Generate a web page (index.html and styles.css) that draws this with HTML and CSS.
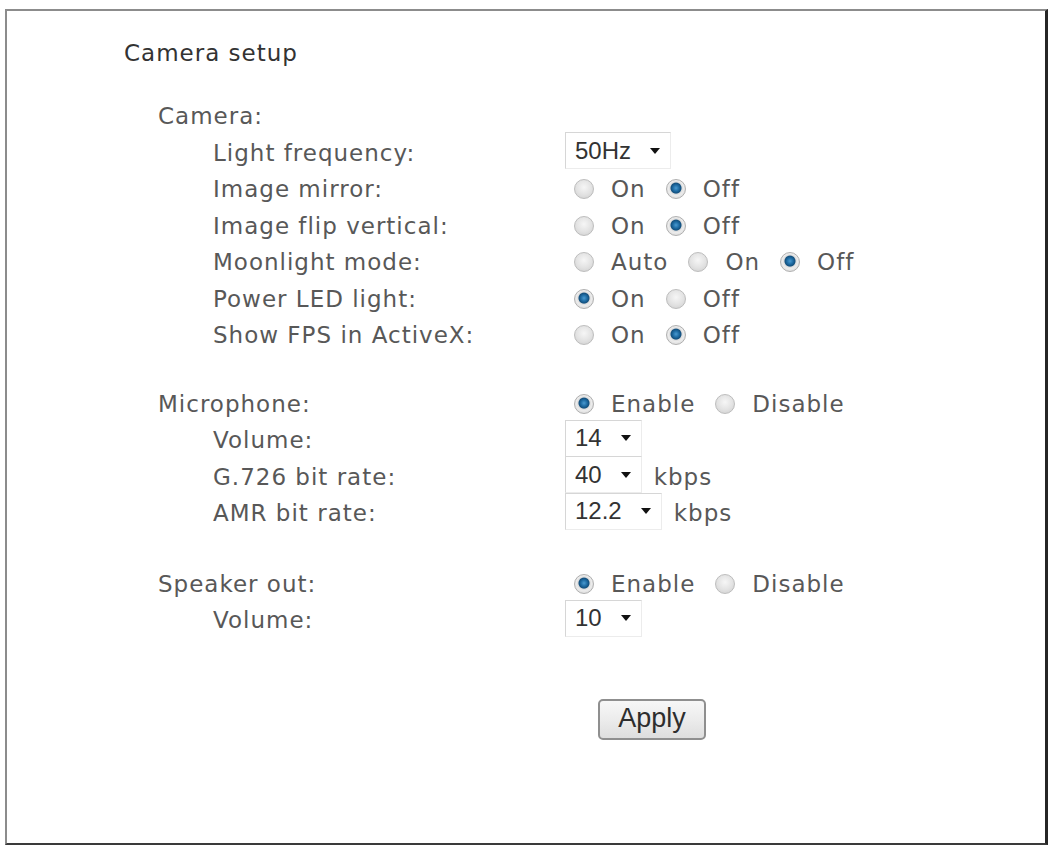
FILE: index.html
```html
<!DOCTYPE html>
<html lang="en">
<head>
    <meta charset="UTF-8">
    <title>Camera setup</title>
    <link rel="stylesheet" href="styles.css">
</head>
<body>

    <div class="frame">
        <div class="title">Camera setup</div>

        <div class="group">
            <div class="row"><span class="label">Camera:</span></div>
            <div class="row sub">
                <span class="label">Light frequency:</span>
                <div class="ctrl"><span class="select">50Hz<i class="arrow"></i></span></div>
            </div>
            <div class="row sub">
                <span class="label">Image mirror:</span>
                <div class="ctrl">
                    <span class="radio"></span><span class="opt">On</span>
                    <span class="radio on"></span><span class="opt">Off</span>
                </div>
            </div>
            <div class="row sub">
                <span class="label">Image flip vertical:</span>
                <div class="ctrl">
                    <span class="radio"></span><span class="opt">On</span>
                    <span class="radio on"></span><span class="opt">Off</span>
                </div>
            </div>
            <div class="row sub">
                <span class="label">Moonlight mode:</span>
                <div class="ctrl">
                    <span class="radio"></span><span class="opt">Auto</span>
                    <span class="radio"></span><span class="opt">On</span>
                    <span class="radio on"></span><span class="opt">Off</span>
                </div>
            </div>
            <div class="row sub">
                <span class="label">Power LED light:</span>
                <div class="ctrl">
                    <span class="radio on"></span><span class="opt">On</span>
                    <span class="radio"></span><span class="opt">Off</span>
                </div>
            </div>
            <div class="row sub">
                <span class="label">Show FPS in ActiveX:</span>
                <div class="ctrl">
                    <span class="radio"></span><span class="opt">On</span>
                    <span class="radio on"></span><span class="opt">Off</span>
                </div>
            </div>
        </div>

        <div class="group">
            <div class="row">
                <span class="label">Microphone:</span>
                <div class="ctrl">
                    <span class="radio on"></span><span class="opt">Enable</span>
                    <span class="radio"></span><span class="opt">Disable</span>
                </div>
            </div>
            <div class="row sub">
                <span class="label">Volume:</span>
                <div class="ctrl"><span class="select">14<i class="arrow"></i></span></div>
            </div>
            <div class="row sub">
                <span class="label">G.726 bit rate:</span>
                <div class="ctrl"><span class="select">40<i class="arrow"></i></span><span class="unit">kbps</span></div>
            </div>
            <div class="row sub">
                <span class="label">AMR bit rate:</span>
                <div class="ctrl"><span class="select">12.2<i class="arrow"></i></span><span class="unit">kbps</span></div>
            </div>
        </div>

        <div class="group">
            <div class="row">
                <span class="label">Speaker out:</span>
                <div class="ctrl">
                    <span class="radio on"></span><span class="opt">Enable</span>
                    <span class="radio"></span><span class="opt">Disable</span>
                </div>
            </div>
            <div class="row sub">
                <span class="label">Volume:</span>
                <div class="ctrl"><span class="select">10<i class="arrow"></i></span></div>
            </div>
        </div>

        <div class="actions">
            <button class="apply">Apply</button>
        </div>
    </div>

</body>
</html>
```

FILE: styles.css
```css
body {
    margin: 0;
    background-color: #fff;
    font-family: "DejaVu Sans", Verdana, sans-serif;
    color: #585858;
}

.frame {
    box-sizing: border-box;
    height: 836px;
    margin: 9px 2px 0 5px;
    padding-top: 24px;
    border-style: solid;
    border-width: 2px 3px 2px 2px;
    border-color: #8c8c8c #262626 #3a3a3a #8c8c8c;
}

.title {
    height: 37px;
    line-height: 37px;
    padding-left: 117px;
    margin-bottom: 26px;
    font-size: 23px;
    letter-spacing: 1px;
    color: #333;
}

.group {
    margin-bottom: 32px;
}

.group + .group {
    margin-bottom: 34px;
}

.row {
    display: flex;
    align-items: center;
    height: 36.5px;
    padding-left: 151px;
    font-size: 23px;
    letter-spacing: 1px;
}

.row .label {
    width: 407px;
    flex-shrink: 0;
}

.row.sub {
    padding-left: 206px;
}

.row.sub .label {
    width: 352px;
}

.ctrl {
    display: flex;
    align-items: center;
}

.select {
    display: flex;
    align-items: center;
    box-sizing: border-box;
    height: 37px;
    margin-top: -4px;
    padding: 0 10px 0 9px;
    border: 1px solid #d6d6d6;
    border-right-color: #ececec;
    border-bottom-color: #ececec;
    font-family: "Liberation Sans", Arial, sans-serif;
    font-size: 24px;
    letter-spacing: 0;
    color: #333;
}

.arrow {
    width: 0;
    height: 0;
    margin-left: 19px;
    border-left: 5px solid transparent;
    border-right: 5px solid transparent;
    border-top: 6px solid #111;
}

.unit {
    margin-left: 12px;
    color: #585858;
}

.radio {
    box-sizing: border-box;
    width: 20px;
    height: 20px;
    margin: 0 17px 0 0;
    border-radius: 50%;
    border: 1px solid #bdbdbd;
    background: radial-gradient(circle at 50% 40%, #f6f6f6 0, #e2e2e2 55%, #cccccc 100%);
}

.ctrl .radio:first-child {
    margin-left: 9px;
}

.radio.on {
    border-color: #b0b0b0;
    background: radial-gradient(circle at 50% 45%, #4a9ad0 0, #1f6da5 3px, #13507e 5px, #dcdcdc 6px, #ececec 7.5px, #cfcfcf 100%);
}

.opt {
    margin-right: 20px;
}

.actions {
    padding-left: 591px;
    margin-top: 60px;
}

.apply {
    width: 108px;
    height: 41px;
    padding: 0 0 2px 0;
    border: 2px solid #8f8f8f;
    border-radius: 5px;
    background: linear-gradient(#f7f7f7, #ececec 50%, #dedede);
    font-family: "Liberation Sans", Arial, sans-serif;
    font-size: 27px;
    color: #2e2e2e;
}
```
